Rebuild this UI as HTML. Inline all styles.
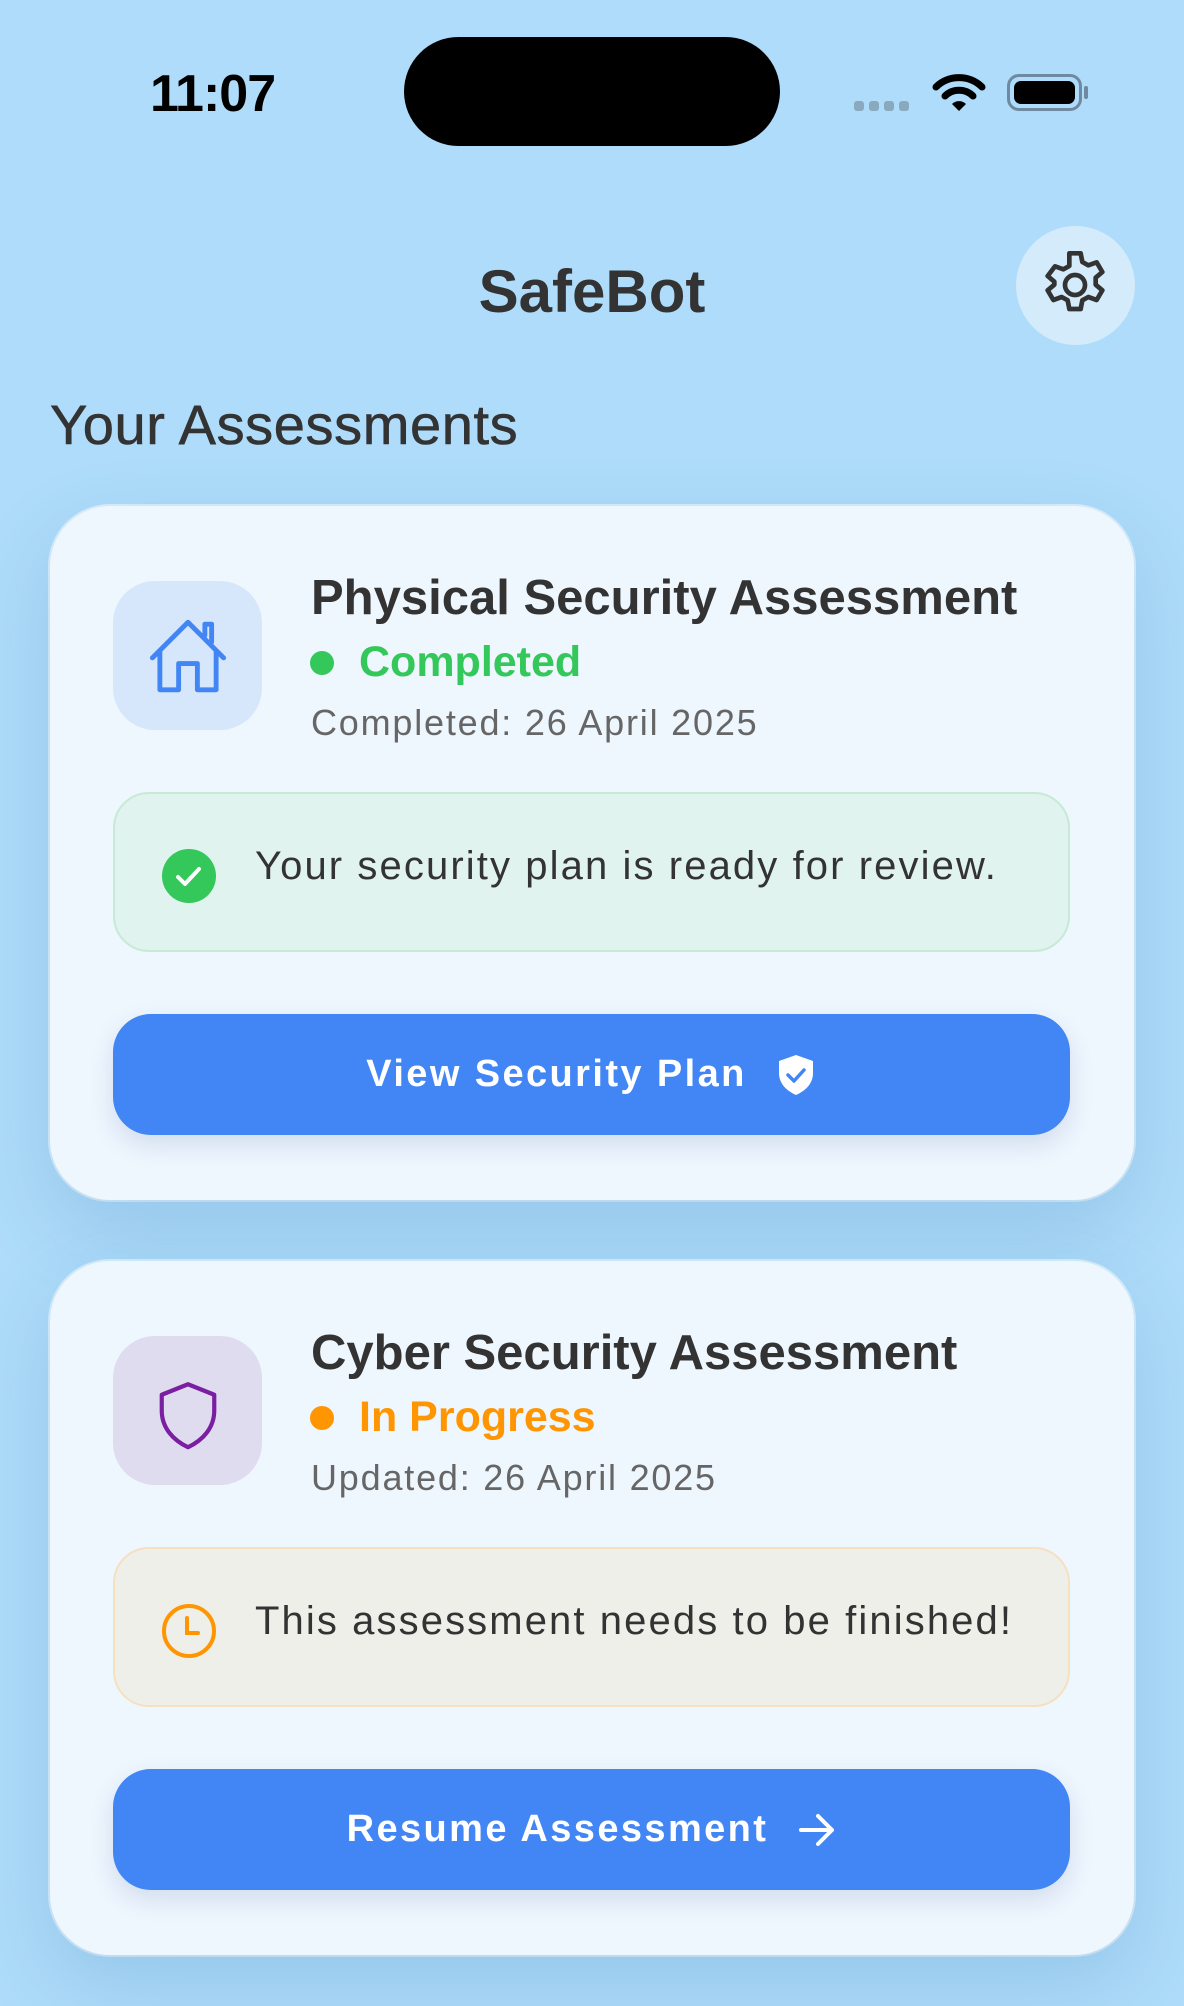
<!DOCTYPE html>
<html><head><meta charset="utf-8"><style>
*{margin:0;padding:0;box-sizing:border-box}
html,body{width:1184px;height:2006px;overflow:hidden;background:#aedcfa;font-family:"Liberation Sans",sans-serif;color:#333}
.abs{position:absolute}
.card{position:absolute;left:50px;width:1084px;height:694px;background:#eef6fe;border-radius:60px;box-shadow:0 30px 80px rgba(40,100,160,0.18),0 0 0 2px rgba(255,255,255,0.5)}
.ibox{position:absolute;left:63px;top:75px;width:149px;height:149px;border-radius:42px}
.title{position:absolute;left:261px;top:64px;font-size:49px;font-weight:bold;color:#333;white-space:nowrap}
.dot{position:absolute;left:260px;width:24px;height:24px;border-radius:50%}
.status{position:absolute;left:309px;font-size:43px;font-weight:bold;white-space:nowrap}
.date{position:absolute;left:261px;font-size:36px;color:#666;white-space:nowrap;letter-spacing:1.8px}
.note{position:absolute;left:63px;width:957px;height:160px;border-radius:36px;border:2px solid}
.note span{position:absolute;left:140px;top:50px;font-size:40px;color:#333;white-space:nowrap;letter-spacing:2.1px}
.btn{position:absolute;left:63px;width:957px;height:121px;border-radius:38px;background:#4285f4;color:#fff;font-size:38px;font-weight:bold;display:flex;align-items:center;justify-content:center;box-shadow:0 10px 24px rgba(60,90,140,0.15);letter-spacing:2.4px}
</style></head><body>
<div class="abs" style="left:150px;top:64px;font-size:52px;font-weight:bold;color:#000;letter-spacing:-1px">11:07</div>
<div class="abs" style="left:404px;top:37px;width:376px;height:109px;border-radius:55px;background:#000"></div>
<div class="abs" style="left:854px;top:101px;width:58px;height:10px;display:flex;gap:5px"><i style="width:10px;height:10px;border-radius:3px;background:#8aa9bf"></i><i style="width:10px;height:10px;border-radius:3px;background:#8aa9bf"></i><i style="width:10px;height:10px;border-radius:3px;background:#8aa9bf"></i><i style="width:10px;height:10px;border-radius:3px;background:#8aa9bf"></i></div>
<svg class="abs" style="left:932px;top:74px" width="54" height="38" viewBox="0 0 54 38"><path d="M4 13 A33 33 0 0 1 50 13" stroke="#000" stroke-width="7" fill="none" stroke-linecap="round"/><path d="M13 22 A20 20 0 0 1 41 22" stroke="#000" stroke-width="7" fill="none" stroke-linecap="round"/><path d="M20 30 L27 37 L34 30 A10 10 0 0 0 20 30Z" fill="#000"/></svg>
<div class="abs" style="left:1007px;top:74px;width:75px;height:37px;border:3px solid #6f8aa0;border-radius:12px;padding:4px"><div style="width:100%;height:100%;background:#000;border-radius:7px"></div></div>
<div class="abs" style="left:1084px;top:86px;width:4px;height:13px;background:#6f8aa0;border-radius:2px"></div>

<div class="abs" style="left:0;width:1184px;top:257px;text-align:center;font-size:60px;font-weight:bold;color:#333">SafeBot</div>
<div class="abs" style="left:1016px;top:226px;width:119px;height:119px;border-radius:50%;background:#d4ebfb"></div>
<svg class="abs" style="left:1035px;top:245px" width="80" height="80" viewBox="0 0 24 24" fill="none" stroke="#333" stroke-width="1.4" stroke-linejoin="round"><path d="M10.3 2.5h3.4l.5 2.6 1.8 1 2.5-.9 1.7 2.9-2 1.7v2.1l2 1.7-1.7 2.9-2.5-.9-1.8 1-.5 2.6h-3.4l-.5-2.6-1.8-1-2.5.9-1.7-2.9 2-1.7V11l-2-1.7L6 6.4l2.5.9 1.8-1z"/><circle cx="12" cy="12" r="3"/></svg>
<div class="abs" style="left:50px;top:392px;font-size:56px;color:#333;letter-spacing:0.6px;-webkit-text-stroke:0.6px #333">Your Assessments</div>

<div class="card" style="top:506px">
  <div class="ibox" style="background:#d7e7fb"><svg style="position:absolute;left:30px;top:30px" width="90" height="90" viewBox="0 0 24 24" fill="none" stroke="#4285f4" stroke-width="1.3" stroke-linejoin="round" stroke-linecap="round"><path d="M2.5 12.5L12 3l9.5 9.5M4.5 10.5V21h5v-7h5v7h5V10.5M16.5 6.5V3.5h1.8v4.8"/></svg></div>
  <div class="title">Physical Security Assessment</div>
  <div class="dot" style="top:145px;background:#34c759"></div>
  <div class="status" style="top:132px;color:#34c759">Completed</div>
  <div class="date" style="top:196px">Completed: 26 April 2025</div>
  <div class="note" style="top:286px;background:#e0f3ef;border-color:#c6ead5">
    <svg style="position:absolute;left:46px;top:54px" width="56" height="56" viewBox="0 0 56 56"><circle cx="28" cy="28" r="27" fill="#34c759"/><path d="M17 29l7 7 14-15" stroke="#fff" stroke-width="4" fill="none" stroke-linecap="round" stroke-linejoin="round"/></svg>
    <span>Your security plan is ready for review.</span>
  </div>
  <div class="btn" style="top:508px">View Security Plan<svg style="margin-left:28px" width="42" height="44" viewBox="0 0 42 44"><path d="M21 2L38 8v12c0 11-8 18-17 22C12 38 4 31 4 20V8z" fill="#fff"/><path d="M13 22l6 6 10-11" stroke="#4285f4" stroke-width="3.5" fill="none" stroke-linecap="round" stroke-linejoin="round"/></svg></div>
</div>

<div class="card" style="top:1261px">
  <div class="ibox" style="background:#e0dcf0"><svg style="position:absolute;left:33px;top:36px" width="84" height="84" viewBox="0 0 24 24" fill="none" stroke="#7b1fa2" stroke-width="1.2" stroke-linejoin="round"><path d="M12 3.5L19.5 6.5v4.5c0 5-3.3 8.5-7.5 10.5C7.8 19.5 4.5 16 4.5 11V6.5z"/></svg></div>
  <div class="title">Cyber Security Assessment</div>
  <div class="dot" style="top:145px;background:#ff9500"></div>
  <div class="status" style="top:132px;color:#ff9500">In Progress</div>
  <div class="date" style="top:196px">Updated: 26 April 2025</div>
  <div class="note" style="top:286px;background:#efefea;border-color:#f5e0c0">
    <svg style="position:absolute;left:46px;top:54px" width="56" height="56" viewBox="0 0 56 56"><circle cx="28" cy="28" r="25" stroke="#ff9500" stroke-width="4" fill="none"/><path d="M26 15v15h11" stroke="#ff9500" stroke-width="4" fill="none" stroke-linecap="round"/></svg>
    <span>This assessment needs to be finished!</span>
  </div>
  <div class="btn" style="top:508px">Resume Assessment<svg style="margin-left:30px" width="38" height="34" viewBox="0 0 38 34"><path d="M3 17h31M20 3l14 14-14 14" stroke="#fff" stroke-width="4" fill="none" stroke-linecap="round" stroke-linejoin="round"/></svg></div>
</div>
</body></html>
